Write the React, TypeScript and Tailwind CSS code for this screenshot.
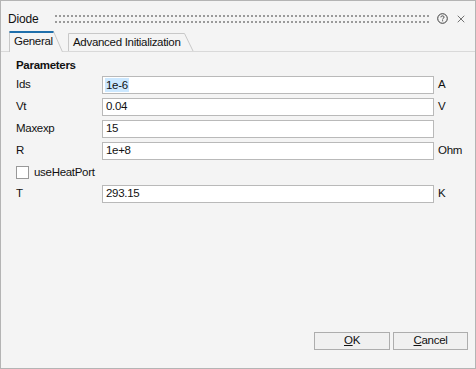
import { X } from "lucide-react";

const font = "font-['Liberation_Sans',Arial,sans-serif] text-[11.5px] tracking-[-0.3px] text-[#111111]";

interface ParamRowProps {
  label: string;
  value: string;
  unit?: string;
  selected?: boolean;
}

function ParamRow({ label, value, unit, selected }: ParamRowProps) {
  return (
    <div className="flex h-[22px] items-center">
      <div className="w-[86px] shrink-0">{label}</div>
      <div className="flex h-[18px] w-[332px] shrink-0 items-center border border-[#b9b9b9] bg-white pl-[2px]">
        {selected ? (
          <span className="bg-[#cce8ff] px-[1px] leading-[14px]">{value}</span>
        ) : (
          <span className="px-[1px]">{value}</span>
        )}
      </div>
      <div className="pl-[4px]">{unit}</div>
    </div>
  );
}

function Tab({ label, active, width }: { label: string; active?: boolean; width: number }) {
  const w = width;
  const h = active ? 21 : 19;
  return (
    <div
      className={`relative flex items-center ${active ? "h-[21px] bg-[#f4f4f4] z-10" : "h-[19px] mt-[2px]"}`}
      style={{ width: w }}
    >
      <svg className="absolute inset-0" width={w} height={h} aria-hidden="true">
        <path
          d={`M0.5 ${h} V0.5 H${w - 9.5} L${w - 0.5} ${h}`}
          fill="none"
          stroke="#c8c8c8"
          strokeWidth="1"
        />
        {active && <rect x="0.5" y="0" width={w - 10} height="2" fill="#1f6fab" />}
      </svg>
      <span className={`relative ${active ? "pl-[5px] pt-[1px]" : "pl-[5px]"}`}>{label}</span>
    </div>
  );
}

function HelpIcon() {
  return (
    <svg width="11" height="11" viewBox="0 0 11 11" aria-hidden="true">
      <circle cx="5.5" cy="5.5" r="4.8" fill="none" stroke="#3a3a3a" strokeWidth="1" />
      <path
        d="M3.9 4.3 C3.9 3.4 4.6 2.9 5.5 2.9 C6.4 2.9 7.1 3.4 7.1 4.2 C7.1 5.1 5.6 5.2 5.6 6.4"
        fill="none"
        stroke="#3a3a3a"
        strokeWidth="1"
      />
      <rect x="5.1" y="7.3" width="1" height="1" fill="#3a3a3a" />
    </svg>
  );
}

export default function App() {
  return (
    <div className={`flex h-[369px] w-[476px] flex-col border border-[#b4b4b4] bg-[#f4f4f4] ${font}`}>
      {/* title bar */}
      <div className="flex h-[30px] items-center pl-[7px] pr-[8px] pt-[5px]">
        <span className="w-[47px] shrink-0 text-[12px] tracking-[-0.2px]">Diode</span>
        <svg className="mt-[9px] shrink-0 self-start" width="375" height="8" shapeRendering="crispEdges" aria-hidden="true">
          <defs>
            <pattern id="grip" width="4" height="6" patternUnits="userSpaceOnUse">
              <rect x="0" y="0" width="2" height="2" fill="#9a9a9a" />
            </pattern>
          </defs>
          <rect width="375" height="8" fill="url(#grip)" />
        </svg>
        <div className="ml-auto flex items-center gap-[7px]">
          <HelpIcon />
          <X size={12} strokeWidth={1.4} color="#3a3a3a" />
        </div>
      </div>

      {/* tabs */}
      <div className="relative flex h-[21px] items-start gap-[5px] pl-[8px]">
        <Tab label="General" active width={54} />
        <Tab label="Advanced Initialization" width={126} />
        <div className="absolute bottom-0 left-0 right-0 h-px bg-[#d9d9d9]" />
      </div>

      {/* content */}
      <div className="flex flex-1 flex-col pl-[15px]">
        <div className="mt-[5px] flex h-[17px] items-center font-bold">Parameters</div>
        <ParamRow label="Ids" value="1e-6" unit="A" selected />
        <ParamRow label="Vt" value="0.04" unit="V" />
        <ParamRow label="Maxexp" value="15" />
        <ParamRow label="R" value="1e+8" unit="Ohm" />
        <div className="flex h-[21px] items-center">
          <div className="h-[13px] w-[13px] border border-[#999999] bg-white" />
          <span className="pl-[5px]">useHeatPort</span>
        </div>
        <ParamRow label="T" value="293.15" unit="K" />
      </div>

      {/* footer */}
      <div className="flex justify-end gap-[3px] pb-[18px] pr-[7px]">
        <button type="button" className="flex h-[18px] w-[76px] items-center justify-center border border-[#adadad] bg-[#f0f0f0]">
          <span><u>O</u>K</span>
        </button>
        <button type="button" className="flex h-[18px] w-[75px] items-center justify-center border border-[#adadad] bg-[#f0f0f0]">
          <span><u>C</u>ancel</span>
        </button>
      </div>
    </div>
  );
}
